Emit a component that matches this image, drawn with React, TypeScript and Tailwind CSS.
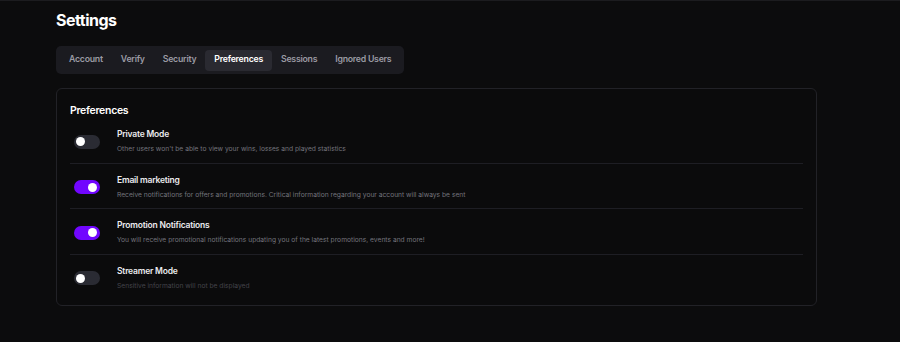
import { useState } from 'react';

const tabs = ['Account', 'Verify', 'Security', 'Preferences', 'Sessions', 'Ignored Users'];

interface Pref {
  id: string;
  title: string;
  description: string;
  enabled: boolean;
  muted?: boolean;
}

const initialPrefs: Pref[] = [
  {
    id: 'private',
    title: 'Private Mode',
    description: "Other users won't be able to view your wins, losses and played statistics",
    enabled: false,
  },
  {
    id: 'email',
    title: 'Email marketing',
    description:
      'Receive notifications for offers and promotions. Critical information regarding your account will always be sent',
    enabled: true,
  },
  {
    id: 'promo',
    title: 'Promotion Notifications',
    description: 'You will receive promotional notifications updating you of the latest promotions, events and more!',
    enabled: true,
  },
  {
    id: 'streamer',
    title: 'Streamer Mode',
    description: 'Sensitive information will not be displayed',
    enabled: false,
    muted: true,
  },
];

function Toggle({ on, onClick }: { on: boolean; onClick: () => void }) {
  return (
    <button
      onClick={onClick}
      className={`relative ml-[4px] h-[14px] w-[26px] shrink-0 rounded-full ${on ? 'bg-[#7106ff]' : 'bg-[#2a2b33]'}`}
    >
      <span
        className={`absolute top-[2.5px] h-[9px] w-[9px] rounded-full bg-white ${on ? 'right-[3px]' : 'left-[2px]'}`}
      />
    </button>
  );
}

export default function App() {
  const [active, setActive] = useState('Preferences');
  const [prefs, setPrefs] = useState(initialPrefs);

  const toggle = (id: string) => {
    setPrefs((p) => p.map((x) => (x.id === id ? { ...x, enabled: !x.enabled } : x)));
  };

  return (
    <div
      className="min-h-[342px] border-t border-[#1c1c1f] bg-[#0c0c0d] px-[56px] pt-[8px]"
      style={{ fontFamily: 'Inter, "Noto Sans", sans-serif' }}
    >
      <h1 className="h-[22px] text-[16px] font-bold leading-[22px] tracking-[-0.5px] text-white">Settings</h1>

      <div className="mt-[15px] inline-flex h-[28px] items-center rounded-[5px] bg-[#1b1b20] px-[4px]">
        {tabs.map((t) => (
          <button
            key={t}
            onClick={() => setActive(t)}
            className={`h-[21px] rounded-[4px] px-[9px] text-[8.75px] font-semibold tracking-[-0.25px] ${
              active === t ? 'bg-[#2a2a31] text-white' : 'text-[#9a9aa3]'
            }`}
          >
            {t}
          </button>
        ))}
      </div>

      <div className="mt-[14px] w-[761px] rounded-[6px] border border-[#222227] bg-[#0b0b0c] px-[13px] pb-[6px] pt-[15px]">
        <h2 className="text-[10.5px] font-semibold leading-[14px] tracking-[-0.3px] text-white">Preferences</h2>
        <div>
          {prefs.map((p, i) => (
            <div
              key={p.id}
              className={`flex items-center gap-[17px] pb-[7.5px] pt-[10px] ${
                i < prefs.length - 1 ? 'border-b border-[#1e1e24]' : ''
              }`}
            >
              <Toggle on={p.enabled} onClick={() => toggle(p.id)} />
              <div>
                <div className="text-[8.5px] font-semibold leading-[12px] tracking-[-0.2px] text-[#ececef]">
                  {p.title}
                </div>
                <div
                  className={`mt-[3px] text-[6.7px] leading-[12px] ${p.muted ? 'text-[#44444b]' : 'text-[#74747c]'}`}
                >
                  {p.description}
                </div>
              </div>
            </div>
          ))}
        </div>
      </div>
    </div>
  );
}
